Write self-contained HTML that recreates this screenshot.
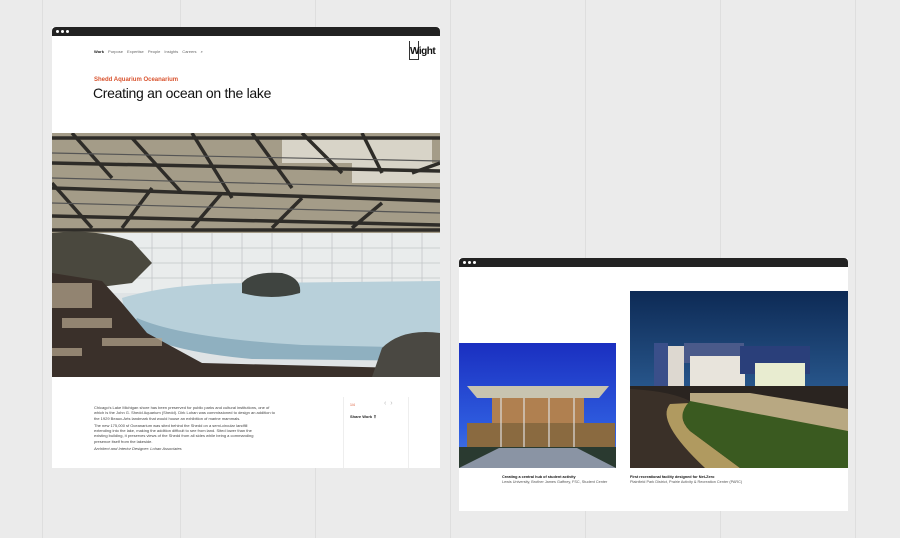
<!DOCTYPE html>
<html><head><meta charset="utf-8"><style>
*{margin:0;padding:0;box-sizing:border-box}
body{width:900px;height:538px;background:#ebebeb;position:relative;overflow:hidden;font-family:"Liberation Sans",Arial,sans-serif}
.gl{position:absolute;top:0;bottom:0;width:1px;background:#dedede}
.win{position:absolute;background:#fff}
.bar{position:absolute;left:0;right:0;top:0;background:#222;border-radius:4px 4px 0 0}
.dot{position:absolute;width:3px;height:3px;border-radius:50%;background:#fff}
.abs{position:absolute}
</style></head><body>
<div class="gl" style="left:42px"></div><div class="gl" style="left:180px"></div><div class="gl" style="left:315px"></div><div class="gl" style="left:450px"></div><div class="gl" style="left:585px"></div><div class="gl" style="left:720px"></div><div class="gl" style="left:855px"></div>

<div class="win" style="left:52px;top:27px;width:388px;height:441px">
 <div class="bar" style="height:9px"><div class="dot" style="left:4px;top:3px"></div><div class="dot" style="left:9px;top:3px"></div><div class="dot" style="left:14px;top:3px"></div></div>
 <div class="abs" style="left:42px;top:22px;font-size:4px;color:#666;white-space:nowrap;word-spacing:3px"><b style="color:#111">Work</b> Purpose Expertise People Insights Careers ⌕</div>
 <div class="abs" style="left:357px;top:14px;width:10px;height:19px;border:1px solid #333;border-top:none"></div>
 <div class="abs" style="left:358px;top:19px;font-size:10px;font-weight:bold;color:#111;letter-spacing:-0.5px">Wight</div>
 <div class="abs" style="left:42px;top:50px;font-size:6px;font-weight:bold;color:#d9532e">Shedd Aquarium Oceanarium</div>
 <div class="abs" style="left:41px;top:58px;font-size:14px;color:#111;letter-spacing:-0.3px">Creating an ocean on the lake</div>
 <svg class="abs" style="left:0;top:106px" width="388" height="244" viewBox="0 0 388 244">
  <rect width="388" height="244" fill="#dfe3e5"/>
  <rect width="388" height="100" fill="#a49c88"/>
  <g fill="#d8d4c8"><rect x="230" y="5" width="150" height="25"/><rect x="300" y="30" width="88" height="20"/></g>
  <g stroke="#2e2c28" stroke-width="3.5" fill="none">
   <path d="M0 5H388M0 55L388 68M0 83L388 92M0 97H388M0 30L388 38"/>
   <path d="M20 0L60 45M80 5L130 60M140 0L180 65M200 0L240 55M250 0L290 40M310 0L330 40M0 50L40 95M100 55L70 95M170 60L140 95M250 65L220 95M330 70L300 95M360 40L388 30"/>
  </g>
  <g stroke="#555" stroke-width="1.2"><path d="M0 20L388 28M0 70L388 80M0 45L388 55"/></g>
  <rect y="100" width="388" height="60" fill="#e9ecec"/>
  <g stroke="#c2c6c8" stroke-width="0.8"><path d="M100 100V170M130 100V170M160 100V170M190 100V170M220 100V170M250 100V170M280 100V170M310 100V170M340 100V170M370 100V170M0 115H388M0 130H388M0 145H388"/></g>
  <path d="M70 165Q120 150 200 150L388 148V225L200 222Q110 215 75 190Z" fill="#b8d0da"/>
  <path d="M85 185Q130 205 250 212L388 215V228L200 226Q110 218 80 195Z" fill="#8fb0c0"/>
  <path d="M190 150Q200 138 230 140Q250 145 248 160Q220 168 190 160Z" fill="#3f4440"/>
  <path d="M0 100Q40 95 80 108L100 130L80 150L0 160Z" fill="#4a483e"/>
  <path d="M0 140L50 148L70 170L95 200L150 230L388 236V244H0Z" fill="#3a302a"/>
  <g fill="#b8a890" opacity=".7"><rect x="0" y="150" width="40" height="25"/><rect x="10" y="185" width="50" height="10"/><rect x="50" y="205" width="60" height="8"/><rect x="0" y="215" width="30" height="8"/></g>
  <path d="M330 215Q350 195 388 200V244H320Z" fill="#4a4842"/>
 </svg>
 <div class="abs" style="left:42px;top:378px;width:185px;font-size:4px;line-height:5.3px;color:#444">
  <p style="margin-bottom:2px">Chicago's Lake Michigan shore has been preserved for public parks and cultural institutions, one of which is the John G. Shedd Aquarium (Shedd). Dirk Lohan was commissioned to design an addition to the 1929 Beaux-Arts landmark that would house an exhibition of marine mammals.</p>
  <p style="margin-bottom:2px;width:170px">The new 175,000 sf Oceanarium was sited behind the Shedd on a semi-circular landfill extending into the lake, making the addition difficult to see from land. Sited lower than the existing building, it preserves views of the Shedd from all sides while being a commanding presence itself from the lakeside.</p>
  <p style="font-style:italic">Architect and Interior Designer: Lohan Associates</p>
 </div>
 <div class="abs" style="left:291px;top:370px;width:1px;height:71px;background:#eee"></div>
 <div class="abs" style="left:356px;top:370px;width:1px;height:71px;background:#eee"></div>
 <div class="abs" style="left:298px;top:376px;font-size:3.5px;color:#d9532e">1/4</div>
 <div class="abs" style="left:332px;top:373px;font-size:7px;color:#bbb">‹ &nbsp;›</div>
 <div class="abs" style="left:298px;top:387px;font-size:4px;font-weight:bold;color:#222">Share Work ⇪</div>
</div>

<div class="win" style="left:459px;top:258px;width:389px;height:253px">
 <div class="bar" style="height:9px"><div class="dot" style="left:4px;top:3px"></div><div class="dot" style="left:9px;top:3px"></div><div class="dot" style="left:14px;top:3px"></div></div>
 <svg class="abs" style="left:0;top:85px" width="157" height="125" viewBox="0 0 157 125">
  <defs><linearGradient id="s1" x1="0" y1="0" x2="0" y2="1"><stop offset="0" stop-color="#1a2fc0"/><stop offset=".7" stop-color="#2f5ee0"/><stop offset="1" stop-color="#4a7ae0"/></linearGradient></defs>
  <rect width="157" height="125" fill="url(#s1)"/>
  <path d="M8 43H150L140 55H18Z" fill="#c8c4b0"/>
  <rect x="33" y="55" width="92" height="50" fill="#b08050"/>
  <rect x="8" y="80" width="148" height="25" fill="#8a6a40"/>
  <g stroke="#ddd" stroke-width="1.2"><path d="M42 55V105M65 55V105M90 55V105M115 55V105"/></g>
  <rect y="104" width="157" height="21" fill="#2a3a30"/>
  <path d="M40 105H118L157 125H0Z" fill="#8a94a4"/>
 </svg>
 <svg class="abs" style="left:171px;top:33px" width="218" height="177" viewBox="0 0 218 177">
  <defs><linearGradient id="s2" x1="0" y1="0" x2="0" y2="1"><stop offset="0" stop-color="#0d2a55"/><stop offset=".6" stop-color="#2a5a90"/><stop offset=".78" stop-color="#6a8aa0"/></linearGradient></defs>
  <rect width="218" height="177" fill="url(#s2)"/>
  <rect x="24" y="52" width="14" height="45" fill="#3a4f8a"/>
  <rect x="38" y="55" width="16" height="42" fill="#ddd8d0"/>
  <rect x="54" y="52" width="60" height="20" fill="#4a5a8a"/>
  <rect x="60" y="65" width="55" height="32" fill="#e8e4dc"/>
  <rect x="110" y="55" width="70" height="28" fill="#2a3f7a"/>
  <rect x="125" y="72" width="50" height="25" fill="#e8ecd0"/>
  <rect y="95" width="218" height="82" fill="#2a2420"/>
  <path d="M0 98Q40 100 60 110Q40 125 60 140L110 177H0Z" fill="#3a3028"/>
  <path d="M40 113Q25 130 75 177H110L60 140Q45 125 60 112Z" fill="#b09a60"/>
  <path d="M60 110Q45 125 60 140L110 177H218V135Q150 120 70 108Z" fill="#3a5a20"/>
  <path d="M60 110L218 140V118L120 102L60 102Z" fill="#b8a882"/>
 </svg>
 <div class="abs" style="left:43px;top:217px;font-size:3.8px;line-height:5px;color:#555;width:110px"><b style="color:#111">Creating a central hub of student activity</b><br>Lewis University, Brother James Gaffney, FSC, Student Center</div>
 <div class="abs" style="left:171px;top:217px;font-size:3.8px;line-height:5px;color:#555;width:200px"><b style="color:#111">First recreational facility designed for Net-Zero</b><br>Plainfield Park District, Prairie Activity &amp; Recreation Center (PARC)</div>
</div>
</body></html>
